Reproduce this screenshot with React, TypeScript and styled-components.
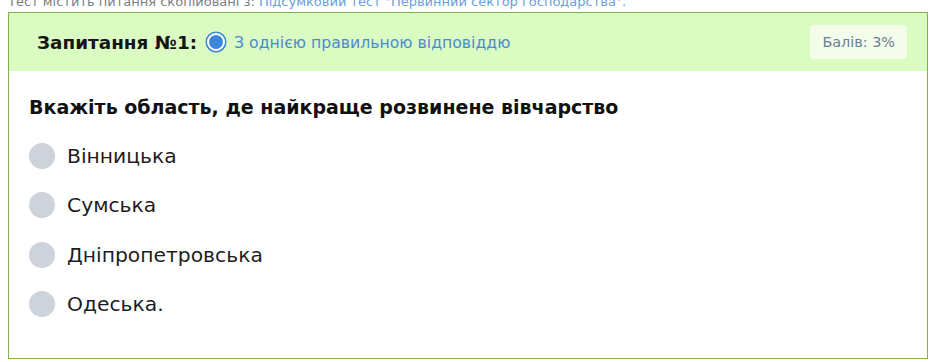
import React from "react";
import styled, { createGlobalStyle } from "styled-components";

const Global = createGlobalStyle`
  html, body { margin: 0; padding: 0; background: #ffffff; overflow: hidden; }
  body { font-family: "DejaVu Sans", "Noto Sans", sans-serif; }
`;

const Page = styled.div`
  padding: 0 12px 0 8px;
`;

const Source = styled.div`
  margin-top: -8px;
  height: 20px;
  font-size: 13px;
  line-height: 20px;
  color: #7a7f85;
  white-space: nowrap;
`;

const SourceLink = styled.a`
  color: #6a9fd8;
  text-decoration: none;
`;

const Card = styled.div`
  border: 1px solid #7fb24a;
  height: 347px;
  box-sizing: border-box;
  display: flex;
  flex-direction: column;
`;

const Header = styled.div`
  background: #dafcc3;
  height: 58px;
  display: flex;
  align-items: center;
  padding: 0 20px 0 28px;
`;

const Title = styled.div`
  font-weight: 700;
  font-size: 18.4px;
  color: #151515;
`;

const TypeIcon = styled.span`
  display: inline-block;
  width: 14px;
  height: 14px;
  border-radius: 50%;
  background: #3a86d8;
  border: 2px solid #ffffff;
  box-shadow: 0 0 0 1.5px #3a86d8;
  margin: 0 9px 0 10px;
`;

const TypeText = styled.span`
  font-size: 15.7px;
  color: #4b8bd0;
`;

const Score = styled.div`
  margin-left: auto;
  background: #f3fdea;
  border-radius: 4px;
  height: 34px;
  padding: 0 12px;
  display: flex;
  align-items: center;
  font-size: 14.4px;
  color: #6b7f99;
`;

const Body = styled.div`
  padding: 24px 20px 0 20px;
`;

const Question = styled.div`
  font-weight: 700;
  font-size: 19px;
  color: #111;
  line-height: 24px;
  margin-bottom: 24px;
`;

const Options = styled.div`
  display: flex;
  flex-direction: column;
  gap: 23.3px;
`;

const Option = styled.label`
  display: flex;
  align-items: center;
  gap: 12px;
  height: 26px;
  font-size: 20.3px;
  color: #1d1d1d;
`;

const Dot = styled.span`
  width: 26px;
  height: 26px;
  border-radius: 50%;
  background: #cdd2db;
  flex: none;
`;

const options = ["Вінницька", "Сумська", "Дніпропетровська", "Одеська."];

export default function App() {
  return (
    <>
      <Global />
      <Page>
        <Source>
          Тест містить питання скопійовані з:{" "}
          <SourceLink>Підсумковий тест "Первинний сектор господарства".</SourceLink>
        </Source>
        <Card>
          <Header>
            <Title>Запитання №1:</Title>
            <TypeIcon />
            <TypeText>З однією правильною відповіддю</TypeText>
            <Score>Балів: 3%</Score>
          </Header>
          <Body>
            <Question>Вкажіть область, де найкраще розвинене вівчарство</Question>
            <Options>
              {options.map((o) => (
                <Option key={o}>
                  <Dot />
                  {o}
                </Option>
              ))}
            </Options>
          </Body>
        </Card>
      </Page>
    </>
  );
}
